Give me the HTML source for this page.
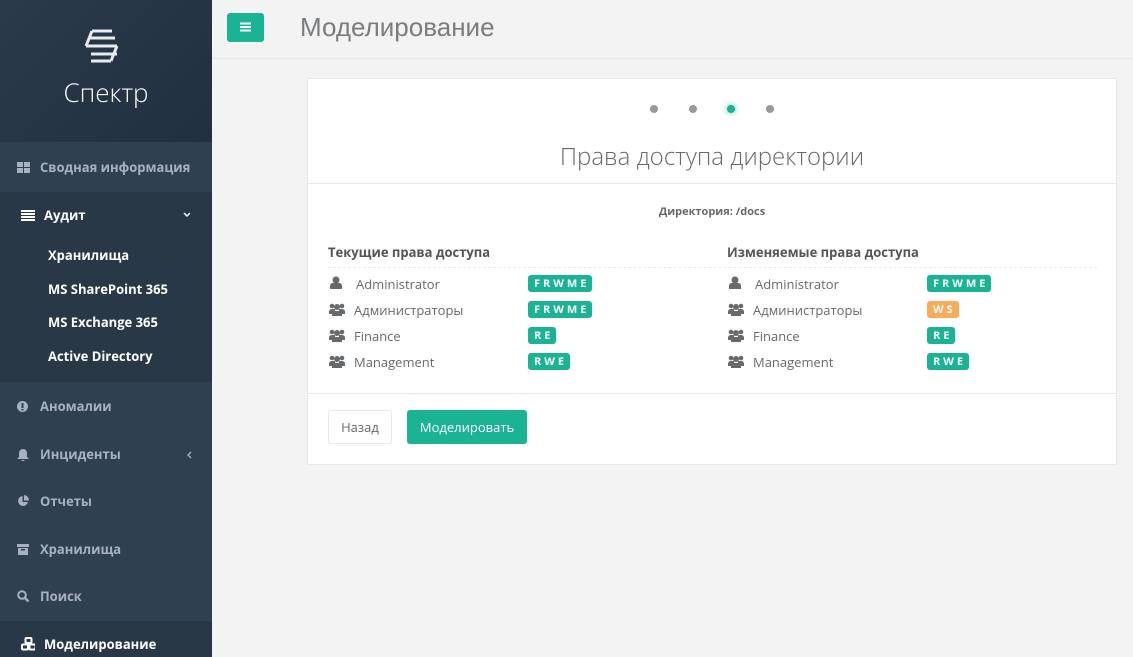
<!DOCTYPE html>
<html><head><meta charset="utf-8"><style>
*{margin:0;padding:0;box-sizing:border-box}
body{width:1133px;height:657px;overflow:hidden;font-family:"Open Sans","Liberation Sans","DejaVu Sans",sans-serif;background:#f3f3f4;position:relative;font-size:13px}
.sb{position:absolute;left:0;top:0;width:212px;height:657px;background:#2f4050}
.logo{height:142px;background:linear-gradient(135deg,#2a3a4a,#213040);position:relative}
.logo .t{position:absolute;left:0;width:212px;top:74px;text-align:center;color:#fff;font-size:26px;font-weight:300}
.it{position:absolute;left:0;width:212px;color:#a7b1c2;font-weight:bold;font-size:13px;display:flex;align-items:center}
.it .ic{width:14px;margin-left:17px;margin-right:9px;display:inline-flex}
.sub{position:absolute;left:48px;color:#fff;font-weight:bold;font-size:13px}
.top{position:absolute;left:212px;top:0;right:0;height:59px;border-bottom:1px solid #e7eaec}
.btn{position:absolute;left:227px;top:13px;width:37px;height:29px;background:#1ab394;border-radius:3px}
h1{position:absolute;left:300px;top:12px;font-weight:normal;font-size:26px;color:#7a7d80;font-family:"Liberation Sans",sans-serif}
.card{position:absolute;left:307px;top:78px;width:810px;height:387px;background:#fff;border:1px solid #e7eaec}
.dot{position:absolute;top:26px;width:8px;height:8px;border-radius:50%;background:#999}
.ct{position:absolute;left:0;width:100%;top:61px;text-align:center;font-size:24px;color:#676a6c;font-weight:300}
.hr{position:absolute;left:0;width:100%;height:1px;background:#e7eaec}
.row{position:absolute;font-size:13px;color:#676a6c}
.b{position:absolute;height:17px;background:#1ab394;color:#fff;font-size:11px;font-weight:bold;letter-spacing:3px;padding:0 3px 0 6px;line-height:17px;border-radius:3px}
</style></head><body>
<div class="sb">
 <div class="logo">
  <svg style="position:absolute;left:81px;top:28px" width="42" height="38" viewBox="0 0 42 38" fill="none" stroke="#e8ecef" stroke-width="3">
   <path d="M11 3h20M5 18l6-15"/><path d="M8 10h26M5 18h31M8 18h26"/><path d="M10 26h26M36 18l-6 15M10 33h20"/></svg>
  <div class="t">Спектр</div>
 </div>
 <div class="it" style="top:142px;height:50px"><span class="ic"><svg width="13" height="11"><rect x="0" y="0" width="6" height="5" fill="#a7b1c2"/><rect x="7" y="0" width="6" height="5" fill="#a7b1c2"/><rect x="0" y="6" width="6" height="5" fill="#a7b1c2"/><rect x="7" y="6" width="6" height="5" fill="#a7b1c2"/></svg></span>Сводная информация</div>
 <div style="position:absolute;top:192px;left:0;width:212px;height:190px;background:#293846"></div>
 <div class="it" style="top:192px;height:46px;color:#fff"><span class="ic" style="margin-left:21px"><svg width="14" height="11"><path d="M0 1h14M0 4h14M0 7h14M0 10h14" stroke="#fff" stroke-width="2"/></svg></span>Аудит<svg style="position:absolute;left:183px;top:20px" width="8" height="6"><path d="M1 1l3 3 3-3" stroke="#fff" stroke-width="1.5" fill="none"/></svg></div>
 <div class="sub" style="top:246px">Хранилища</div>
 <div class="sub" style="top:280px">MS SharePoint 365</div>
 <div class="sub" style="top:313px">MS Exchange 365</div>
 <div class="sub" style="top:347px">Active Directory</div>
 <div class="it" style="top:396px;height:20px"><span class="ic"><svg width="11" height="11"><circle cx="5.5" cy="5.5" r="5.5" fill="#a7b1c2"/><rect x="4.5" y="2" width="2" height="5" fill="#2f4050"/><rect x="4.5" y="8" width="2" height="1.5" fill="#2f4050"/></svg></span>Аномалии</div>
 <div class="it" style="top:444px;height:20px"><span class="ic"><svg width="12" height="13"><path d="M6 1q4 0 4 5v3l2 2H0l2-2V6q0-5 4-5zM4.5 12h3a1.5 1.5 0 0 1-3 0z" fill="#a7b1c2"/></svg></span>Инциденты<svg style="position:absolute;left:187px;top:7px" width="5" height="8"><path d="M4 1L1 4l3 3" stroke="#a7b1c2" stroke-width="1.3" fill="none"/></svg></div>
 <div class="it" style="top:491px;height:20px"><span class="ic"><svg width="12" height="12"><path d="M5.5 1a5 5 0 1 0 5.5 6H5.5z" fill="#a7b1c2"/><path d="M7 0v5.5h5A5.5 5.5 0 0 0 7 0z" fill="#a7b1c2"/></svg></span>Отчеты</div>
 <div class="it" style="top:539px;height:20px"><span class="ic"><svg width="12" height="11"><rect x="0" y="0" width="12" height="3" fill="#a7b1c2"/><rect x="1" y="4" width="10" height="7" fill="#a7b1c2"/><rect x="4" y="5" width="4" height="1.5" fill="#2f4050"/></svg></span>Хранилища</div>
 <div class="it" style="top:586px;height:20px"><span class="ic"><svg width="12" height="12"><circle cx="5" cy="5" r="3.8" stroke="#a7b1c2" stroke-width="2" fill="none"/><path d="M8 8l3.5 3.5" stroke="#a7b1c2" stroke-width="2.3"/></svg></span>Поиск</div>
 <div style="position:absolute;top:621px;left:0;width:212px;height:36px;background:#293846"></div>
 <div class="it" style="top:634px;height:20px;color:#fff"><span class="ic" style="margin-left:21px"><svg width="16" height="14"><g fill="none" stroke="#fff" stroke-width="2"><rect x="4.5" y="1" width="6" height="5" rx="1"/><rect x="1" y="7.5" width="6" height="5" rx="1"/><rect x="8.5" y="7.5" width="6" height="5" rx="1"/></g></svg></span>Моделирование</div>
</div>
<div class="top"></div>
<div class="btn"><svg style="position:absolute;left:13px;top:9px" width="11" height="10"><path d="M0 1.5h11M0 5h11M0 8.5h11" stroke="#fff" stroke-width="2"/></svg></div>
<h1>Моделирование</h1>
<div class="card">
 <div class="dot" style="left:342px"></div><div class="dot" style="left:381px"></div>
 <div class="dot" style="left:419px;background:#1ab394;box-shadow:0 0 4px 2px rgba(26,179,148,.3)"></div><div class="dot" style="left:458px"></div>
 <div class="ct">Права доступа директории</div>
 <div class="hr" style="top:104px"></div>
 <div style="position:absolute;top:125px;width:100%;text-align:center;font-size:11px;font-weight:bold;color:#676a6c">Директория: /docs</div>
 <div class="row" style="left:20px;top:164px;font-weight:bold;color:#555">Текущие права доступа</div>
 <div class="row" style="left:419px;top:164px;font-weight:bold;color:#555">Изменяемые права доступа</div>
 <div style="position:absolute;left:20px;top:188px;width:769px;border-top:1px dashed #e7eaec"></div>
 <div class="row" style="left:48px;top:196px">Administrator</div><div class="b" style="left:220px;top:196px">FRWME</div>
 <div class="row" style="left:46px;top:222px">Администраторы</div><div class="b" style="left:220px;top:222px">FRWME</div>
 <div class="row" style="left:46px;top:248px">Finance</div><div class="b" style="left:220px;top:248px">RE</div>
 <div class="row" style="left:46px;top:274px">Management</div><div class="b" style="left:220px;top:274px">RWE</div>
 <div class="row" style="left:447px;top:196px">Administrator</div><div class="b" style="left:619px;top:196px">FRWME</div>
 <div class="row" style="left:445px;top:222px">Администраторы</div><div class="b" style="left:619px;top:222px;background:#f8ac59">WS</div>
 <div class="row" style="left:445px;top:248px">Finance</div><div class="b" style="left:619px;top:248px">RE</div>
 <div class="row" style="left:445px;top:274px">Management</div><div class="b" style="left:619px;top:274px">RWE</div>
 <svg style="position:absolute;left:22px;top:197px" width="12" height="13"><circle cx="6" cy="4" r="3.5" fill="#676a6c"/><path d="M0 13v-3q0-3 3-3h6q3 0 3 3v3z" fill="#676a6c"/></svg>
 <svg style="position:absolute;left:421px;top:197px" width="12" height="13"><circle cx="6" cy="4" r="3.5" fill="#676a6c"/><path d="M0 13v-3q0-3 3-3h6q3 0 3 3v3z" fill="#676a6c"/></svg>
 <svg style="position:absolute;left:0;top:0" width="810" height="300">
  <g fill="#676a6c">
  <g id="g1" transform="translate(21,224)"><circle cx="3" cy="3" r="2.3"/><circle cx="13" cy="3" r="2.3"/><circle cx="8" cy="4" r="3"/><path d="M0 11v-2q0-3 3-3h3v5zM16 11v-2q0-3-3-3h-3v5z"/><path d="M3 13v-2q0-3 3-3h4q3 0 3 3v2z"/></g>
  <use href="#g1" y="26"/><use href="#g1" y="52"/><use href="#g1" x="399"/><use href="#g1" x="399" y="26"/><use href="#g1" x="399" y="52"/>
  </g></svg>
 <div class="hr" style="top:314px"></div>
 <div style="position:absolute;left:20px;top:331px;width:64px;height:34px;border:1px solid #e7eaec;border-radius:3px;text-align:center;line-height:32px;color:#676a6c">Назад</div>
 <div style="position:absolute;left:99px;top:331px;width:120px;height:34px;background:#1ab394;border-radius:3px;text-align:center;line-height:34px;color:#fff">Моделировать</div>
</div>
</body></html>
